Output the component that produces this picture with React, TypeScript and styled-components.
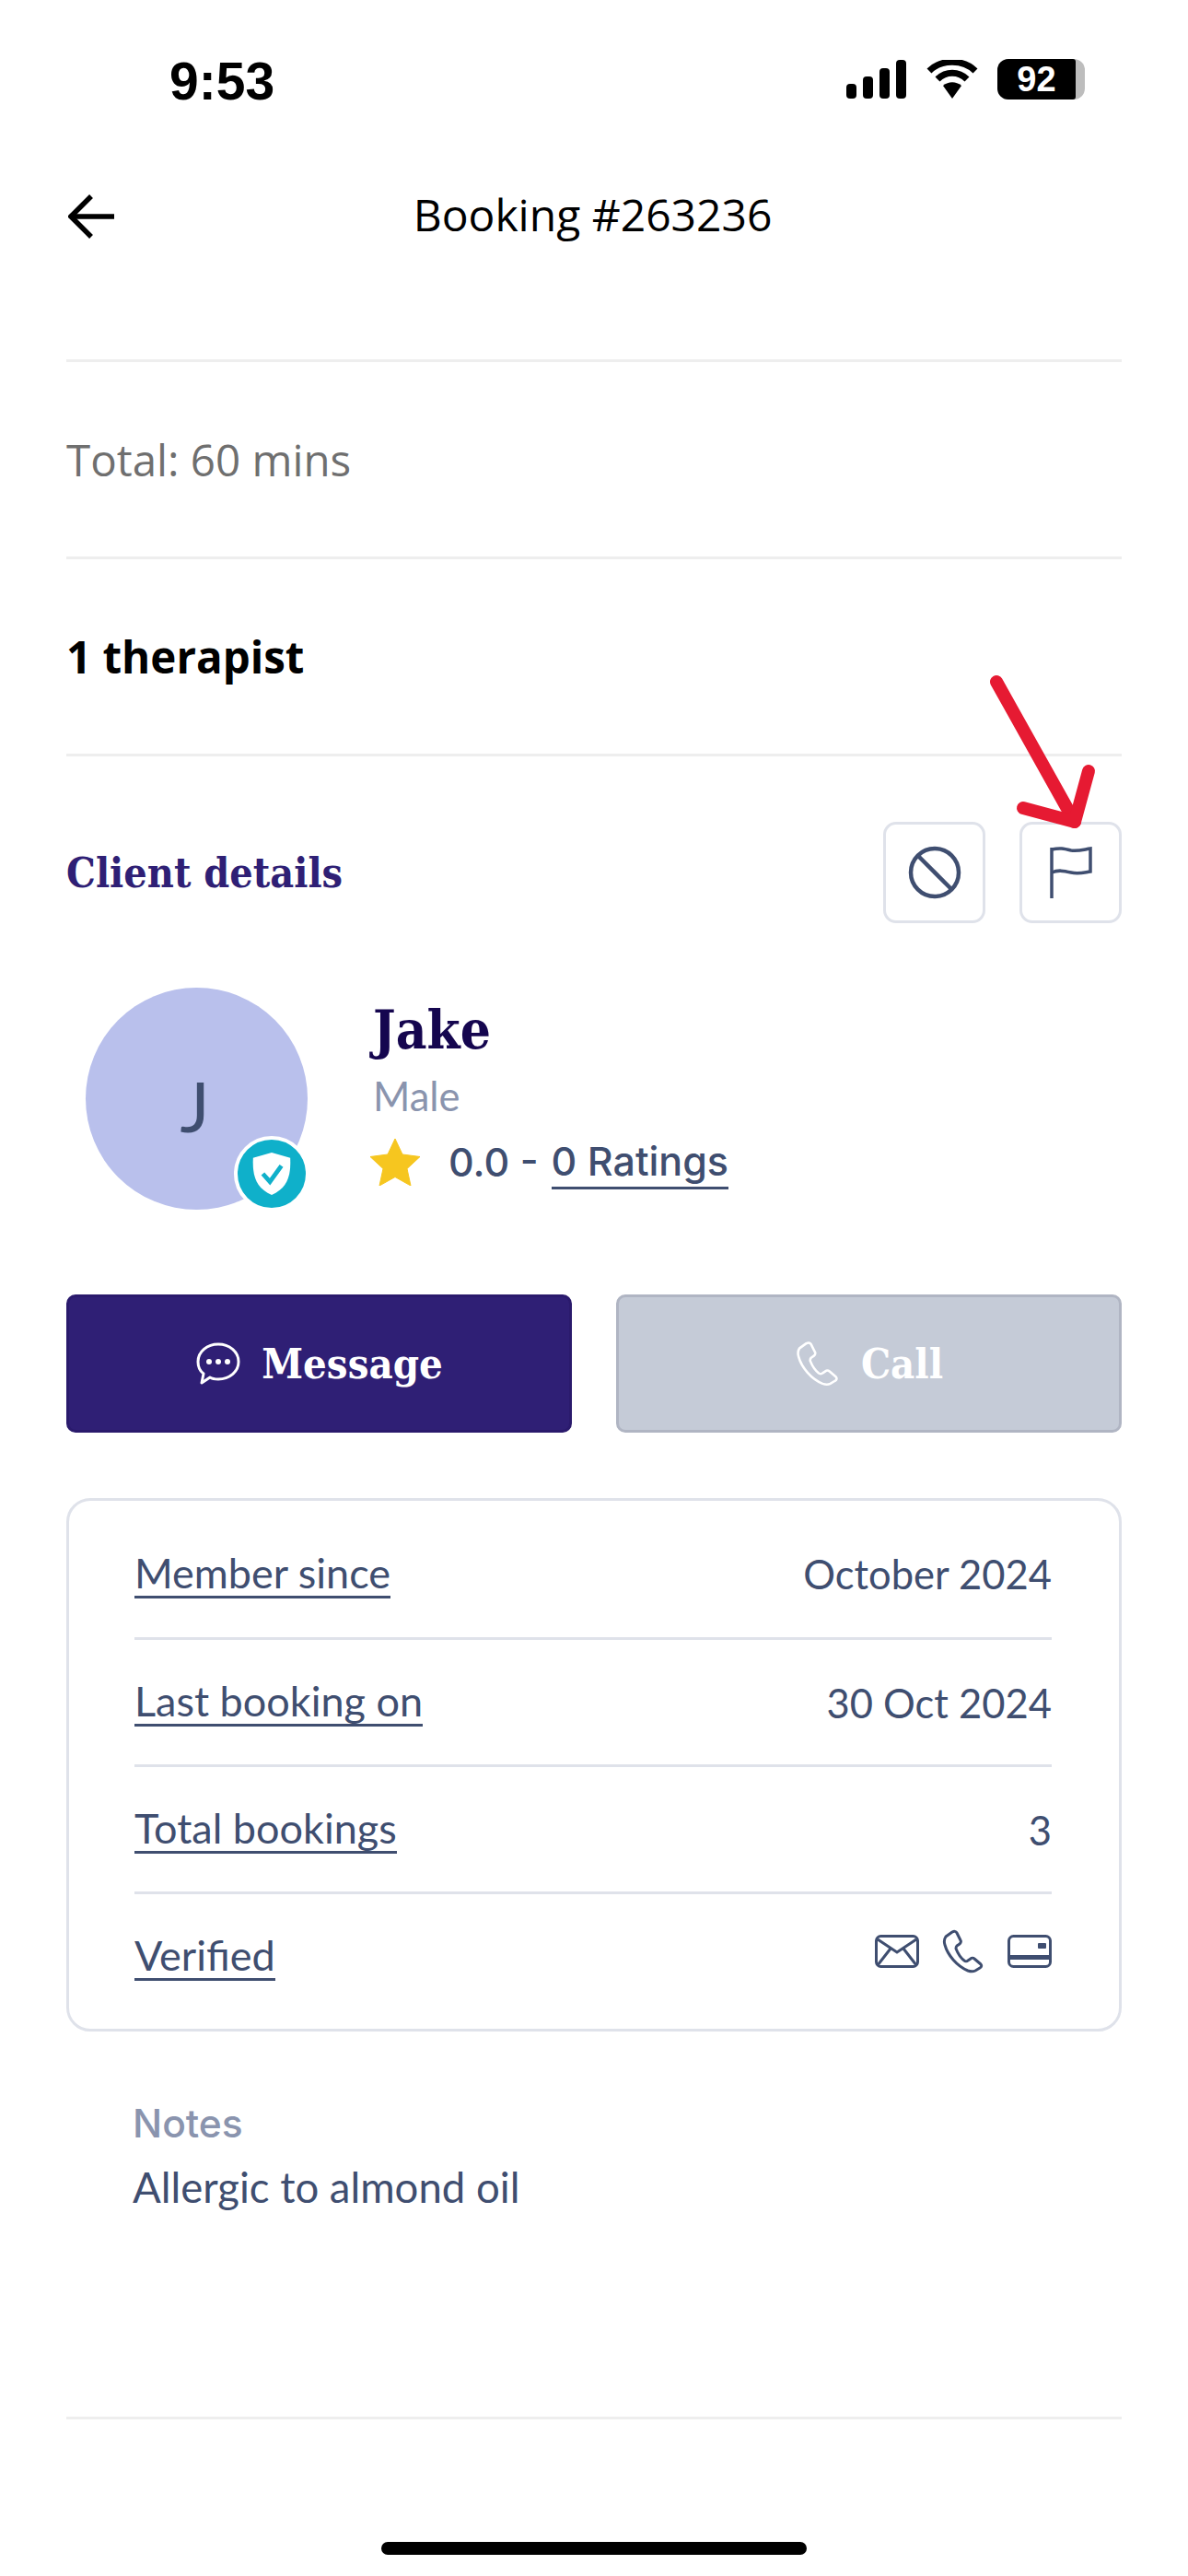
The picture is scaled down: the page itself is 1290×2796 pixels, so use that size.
import React from 'react'
import styled, { createGlobalStyle } from 'styled-components'

const INK = '#3f4e70'
const LINE = '#dfe2ea'
const BODY_FONT = '"Lato", "Open Sans", sans-serif'
const MEDIUM_FONT = '"Inter", "Lato", sans-serif'
const SLAB_FONT = '"DejaVu Serif", "Liberation Serif", serif'

const GlobalStyle = createGlobalStyle`
  html, body {
    margin: 0;
    padding: 0;
    background: #fff;
  }
  * {
    box-sizing: border-box;
  }
`

const StyledPage = styled.div`
  position: relative;
  width: 1290px;
  height: 2796px;
  overflow: hidden;
  background: #fff;
  font-family: ${BODY_FONT};
`

const StyledStatusBar = styled.div`
  height: 170px;
  padding: 60px 112px 0 184px;
  display: flex;
  justify-content: space-between;
  align-items: flex-start;
`

const StyledTime = styled.span`
  font-family: 'Liberation Sans', sans-serif;
  font-size: 57px;
  font-weight: 700;
  line-height: 57px;
  color: #000;
`

const StyledStatusIcons = styled.div`
  margin-top: 4px;
  display: flex;
  align-items: center;
  gap: 20px;
`

const StyledBattery = styled.div`
  width: 95px;
  height: 44px;
  border-radius: 12px;
  background: #bdbdbd;
  display: flex;
`

const StyledBatteryLevel = styled.span`
  width: 85px;
  border-radius: 12px 3px 3px 12px;
  background: #000;
  text-align: center;
  font-family: 'Liberation Sans', sans-serif;
  font-size: 38px;
  line-height: 44px;
  font-weight: 700;
  color: #fff;
`

const StyledHeader = styled.div`
  position: relative;
  height: 124px;
  margin-bottom: 96px;
  display: flex;
  align-items: center;
  justify-content: center;
`

const StyledBack = styled.button`
  position: absolute;
  left: 74px;
  top: 41px;
  padding: 0;
  border: 0;
  background: none;
  line-height: 0;
`

const StyledTitle = styled.h1`
  margin: 0 3px 0 0;
  font-family: 'Open Sans', sans-serif;
  font-size: 48px;
  font-weight: 400;
  color: #000;
`

const StyledContent = styled.div`
  padding: 0 72px;
`

const StyledSummaryRow = styled.div<{ $bold?: boolean }>`
  height: 214px;
  border-top: 3px solid #eeeeee;
  display: flex;
  align-items: center;
  font-family: 'Open Sans', sans-serif;
  font-size: 47.5px;
  color: ${(p) => (p.$bold ? '#000' : '#6f6f6f')};
  font-weight: ${(p) => (p.$bold ? 700 : 400)};
`

const StyledClientHead = styled.div`
  border-top: 3px solid #eeeeee;
  padding-top: 71px;
  display: flex;
  justify-content: space-between;
  align-items: center;
`

const StyledClientTitle = styled.h2`
  margin: 0;
  font-family: ${SLAB_FONT};
  font-stretch: condensed;
  font-size: 44.5px;
  font-weight: 700;
  color: #2f1f75;
`

const StyledIconButtons = styled.div`
  display: flex;
  gap: 37px;
`

const StyledIconButton = styled.button`
  width: 111px;
  height: 110px;
  padding: 0;
  border: 3px solid ${LINE};
  border-radius: 14px;
  background: #fff;
  display: flex;
  align-items: center;
  justify-content: center;
`

const StyledProfile = styled.div`
  margin: 70px 0 0 21px;
  display: flex;
  gap: 69px;
  align-items: center;
`

const StyledAvatar = styled.div`
  position: relative;
  width: 241px;
  height: 241px;
  padding: 14px 4px 0 0;
  border-radius: 50%;
  background: #b9c0ec;
  display: flex;
  align-items: center;
  justify-content: center;
  font-size: 76px;
  color: ${INK};
`

const StyledBadge = styled.div`
  position: absolute;
  right: -2px;
  bottom: -2px;
  width: 82px;
  height: 82px;
  border-radius: 50%;
  border: 4px solid #fff;
  background: #0fb0ca;
  display: flex;
  align-items: center;
  justify-content: center;
`

const StyledInfo = styled.div`
  margin: 0 0 12px 2px;
  display: flex;
  flex-direction: column;
`

const StyledName = styled.div`
  font-family: ${SLAB_FONT};
  font-stretch: condensed;
  font-size: 58px;
  line-height: 70px;
  font-weight: 700;
  color: #15064f;
`

const StyledGender = styled.div`
  margin-top: 11px;
  font-size: 43.5px;
  line-height: 50px;
  color: #8a94ae;
`

const StyledRating = styled.div`
  margin-top: 18px;
  display: flex;
  align-items: center;
  font-family: ${MEDIUM_FONT};
  font-size: 43px;
  line-height: 56px;
  color: ${INK};
  font-weight: 500;
  svg {
    margin: 0 30px 0 -4px;
  }
`

const StyledRatingLink = styled.span`
  margin-left: 14px;
  border-bottom: 3px solid ${INK};
`

const StyledActions = styled.div`
  margin-top: 92px;
  display: grid;
  grid-template-columns: 1fr 1fr;
  gap: 48px;
`

const StyledAction = styled.button<{ $disabled?: boolean }>`
  height: 150px;
  border-radius: 10px;
  border: 3px solid ${(p) => (p.$disabled ? '#b0b5c3' : '#2a1a6c')};
  background: ${(p) => (p.$disabled ? '#c5cbd7' : '#2f1f75')};
  color: #fff;
  display: flex;
  align-items: center;
  justify-content: center;
  gap: 22px;
  font-family: ${SLAB_FONT};
  font-stretch: condensed;
  font-size: 45px;
  font-weight: 700;
`

const StyledCard = styled.div`
  margin-top: 71px;
  height: 579px;
  border: 3px solid ${LINE};
  border-radius: 26px;
  padding: 10px 73px 0 71px;
`

const StyledRow = styled.div`
  height: 138px;
  display: flex;
  justify-content: space-between;
  align-items: center;
  font-size: 45px;
  color: ${INK};
  & + & {
    border-top: 3px solid ${LINE};
  }
`

const StyledLabel = styled.span`
  border-bottom: 3px solid ${INK};
  line-height: 50px;
`

const StyledValue = styled.span`
  font-size: 43.5px;
`

const StyledVerified = styled.div`
  display: flex;
  align-items: center;
  gap: 24px;
  margin-top: -12px;
`

const StyledNotes = styled.div`
  margin: 70px 0 0 72px;
`

const StyledNotesLabel = styled.div`
  font-family: ${MEDIUM_FONT};
  font-size: 42.5px;
  line-height: 60px;
  font-weight: 500;
  color: #8a94ae;
`

const StyledNotesText = styled.div`
  margin-top: 9px;
  font-size: 45.5px;
  line-height: 60px;
  color: ${INK};
`

const StyledFooterLine = styled.div`
  position: absolute;
  left: 72px;
  right: 72px;
  top: 2623px;
  height: 3px;
  background: #eeeeee;
`

const StyledHomeBar = styled.div`
  position: absolute;
  left: 414px;
  top: 2759px;
  width: 462px;
  height: 14px;
  border-radius: 7px;
  background: #000;
`

const StyledPointer = styled.svg`
  position: absolute;
  left: 1060px;
  top: 720px;
`

const Star = () => (
  <svg width="56" height="52" viewBox="0 0 56 52">
    <path
      d="M28 1l8 17 19 2.500-14 13 4 18.500-17-9.500-17 9.500 4-18.500-14-13 19-2.500z"
      fill="#f6c61f"
      stroke="#f6c61f"
      strokeWidth="1"
      strokeLinejoin="round"
    />
  </svg>
)

const Phone = ({ size, color, stroke }: { size: number; color: string; stroke: number }) => (
  <svg width={size} height={size} viewBox="0 0 48 48" fill="none">
    <path
      d="M5 8c-2 3-2 6-1 9 3 11 13 23 25 28 3 1 6 1 8 0l5-3c2-1 2-3 1-4l-7-6c-1-1-3-1-4 0l-3 2c-1 1-3 1-4 0-4-3-7-8-9-13 0-1 0-2 1-3l3-2c1-1 2-3 1-4l-4-8c-1-2-3-2-5-1z"
      stroke={color}
      strokeWidth={stroke}
      strokeLinejoin="round"
    />
  </svg>
)

const details = [
  { label: 'Member since', value: 'October 2024' },
  { label: 'Last booking on', value: '30 Oct 2024' },
  { label: 'Total bookings', value: '3' },
]

export default function App() {
  return (
    <StyledPage>
      <GlobalStyle />
      <StyledStatusBar>
        <StyledTime>9:53</StyledTime>
        <StyledStatusIcons>
          <svg width="66" height="42" viewBox="0 0 66 42" fill="#000">
            <rect x="0" y="26" width="11" height="16" rx="4" />
            <rect x="18" y="18" width="11" height="24" rx="4" />
            <rect x="36" y="9" width="11" height="33" rx="4" />
            <rect x="54" y="0" width="11" height="42" rx="4" />
          </svg>
          <svg width="58" height="42" viewBox="0 0 58 42">
            <path d="M29 42L19 28c6-5 14-5 20 0z" fill="#000" />
            <path d="M13 21C22 12 36 12 45 21" stroke="#000" strokeWidth="7" fill="none" />
            <path d="M4 12C17 -1 41 -1 54 12" stroke="#000" strokeWidth="7" fill="none" />
          </svg>
          <StyledBattery>
            <StyledBatteryLevel>92</StyledBatteryLevel>
          </StyledBattery>
        </StyledStatusIcons>
      </StyledStatusBar>

      <StyledHeader>
        <StyledBack aria-label="Back">
          <svg width="50" height="48" viewBox="0 0 50 48" fill="none" stroke="#000" strokeWidth="5.500">
            <path d="M50 24H4" />
            <path d="M25 2L3 24l22 22" />
          </svg>
        </StyledBack>
        <StyledTitle>Booking #263236</StyledTitle>
      </StyledHeader>

      <StyledContent>
        <StyledSummaryRow>Total: 60 mins</StyledSummaryRow>
        <StyledSummaryRow $bold>1 therapist</StyledSummaryRow>

        <StyledClientHead>
          <StyledClientTitle>Client details</StyledClientTitle>
          <StyledIconButtons>
            <StyledIconButton aria-label="Block">
              <svg width="58" height="58" viewBox="0 0 58 58" fill="none" stroke={INK} strokeWidth="4.500">
                <circle cx="29" cy="29" r="26" />
                <path d="M11 11l36 36" />
              </svg>
            </StyledIconButton>
            <StyledIconButton aria-label="Report">
              <svg width="48" height="56" viewBox="0 0 48 56" fill="none" stroke={INK} strokeWidth="3.500">
                <path d="M3 56V1" />
                <path d="M3 3C12 1 16 2 24 4C32 5 38 3 45 2V27C38 28 32 30 24 28C16 26 10 25 3 28" />
              </svg>
            </StyledIconButton>
          </StyledIconButtons>
        </StyledClientHead>

        <StyledProfile>
          <StyledAvatar>
            J
            <StyledBadge>
              <svg width="44" height="48" viewBox="0 0 44 50">
                <path d="M22 1l21 6c1 20-3 34-21 42C4 41 0 27 1 7z" fill="#fff" />
                <path d="M12 25l8 9 13-18" stroke="#0fb0ca" strokeWidth="5" fill="none" />
              </svg>
            </StyledBadge>
          </StyledAvatar>
          <StyledInfo>
            <StyledName>Jake</StyledName>
            <StyledGender>Male</StyledGender>
            <StyledRating>
              <Star />
              0.0 -<StyledRatingLink>0 Ratings</StyledRatingLink>
            </StyledRating>
          </StyledInfo>
        </StyledProfile>

        <StyledActions>
          <StyledAction>
            <svg width="50" height="48" viewBox="0 0 50 48" fill="none">
              <path
                d="M25 3c12 0 22 8 22 19s-10 19-22 19c-3 0-6 0-9-2l-9 6 2-10c-4-3-6-8-6-13C3 11 13 3 25 3z"
                stroke="#fff"
                strokeWidth="3"
                strokeLinejoin="round"
              />
              <circle cx="15" cy="22" r="3" fill="#fff" />
              <circle cx="25" cy="22" r="3" fill="#fff" />
              <circle cx="35" cy="22" r="3" fill="#fff" />
            </svg>
            Message
          </StyledAction>
          <StyledAction $disabled>
            <Phone size={50} color="#fff" stroke={2.500} />
            Call
          </StyledAction>
        </StyledActions>

        <StyledCard>
          {details.map((item) => (
            <StyledRow key={item.label}>
              <StyledLabel>{item.label}</StyledLabel>
              <StyledValue>{item.value}</StyledValue>
            </StyledRow>
          ))}
          <StyledRow>
            <StyledLabel>Verified</StyledLabel>
            <StyledVerified>
              <svg width="48" height="36" viewBox="0 0 48 36" fill="none" stroke={INK} strokeWidth="3">
                <rect x="1.500" y="1.500" width="45" height="33" rx="5" />
                <path d="M3 5l21 14L45 5" />
                <path d="M3 33l14-18M45 33L31 15" />
              </svg>
              <Phone size={48} color={INK} stroke={3} />
              <svg width="48" height="36" viewBox="0 0 48 36" fill="none" stroke={INK} strokeWidth="3">
                <rect x="1.500" y="1.500" width="45" height="33" rx="5" />
                <rect x="2" y="22" width="44" height="5" fill={INK} stroke="none" />
                <rect x="33" y="9" width="9" height="6" rx="1" fill={INK} stroke="none" />
              </svg>
            </StyledVerified>
          </StyledRow>
        </StyledCard>

        <StyledNotes>
          <StyledNotesLabel>Notes</StyledNotesLabel>
          <StyledNotesText>Allergic to almond oil</StyledNotesText>
        </StyledNotes>
      </StyledContent>

      <StyledFooterLine />
      <StyledHomeBar />

      <StyledPointer width="140" height="190" viewBox="0 0 140 190" fill="none" stroke="#e61a32" strokeWidth="14" strokeLinecap="round" strokeLinejoin="round">
        <path d="M22 20l85 152" />
        <path d="M122 117l-15 55-56-15" />
      </StyledPointer>
    </StyledPage>
  )
}
